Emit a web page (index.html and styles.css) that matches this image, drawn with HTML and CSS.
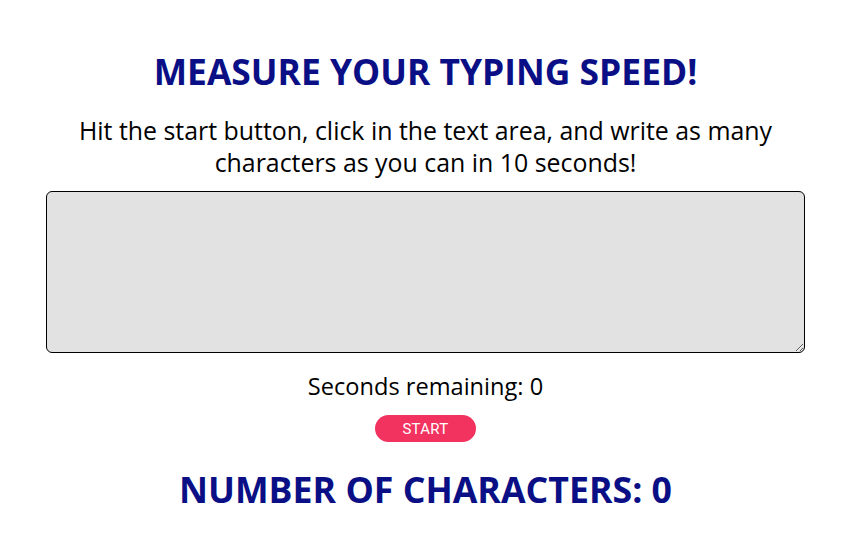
FILE: index.html
```html
<!DOCTYPE html>
<html>
<head>
<meta charset="utf-8">
<link rel="stylesheet" href="styles.css">
</head>
<body>
<main class="page">
  <h1 class="title">MEASURE YOUR TYPING SPEED!</h1>
  <p class="intro">Hit the start button, click in the text area, and write as many characters as you can in 10 seconds!</p>
  <textarea class="typing-area"></textarea>
  <p class="timer">Seconds remaining: 0</p>
  <button class="start-btn">START</button>
  <h2 class="result">NUMBER OF CHARACTERS: 0</h2>
</main>
</body>
</html>
```
FILE: styles.css
```css
html, body {
  margin: 0;
  padding: 0;
  background: #ffffff;
}
.page {
  display: flex;
  flex-direction: column;
  align-items: center;
  padding: 53px 46px 0;
  font-family: "Comic Sans MS", "Open Sans", sans-serif;
  color: #000;
}
.title {
  margin: 0;
  font-size: 35.4px;
  font-weight: 700;
  color: #0a0f85;
  line-height: 36px;
}
.intro {
  margin: 25px 0 0;
  width: 720px;
  text-align: center;
  font-size: 24.9px;
  line-height: 32px;
}
.typing-area {
  margin-top: 13px;
  box-sizing: border-box;
  width: 759px;
  height: 162px;
  border: 1px solid #000;
  border-radius: 6px;
  background: #e2e2e2;
  resize: vertical;
}
.timer {
  margin: 17px 0 0;
  font-size: 23.6px;
  line-height: 32px;
}
.start-btn {
  margin-top: 13px;
  width: 101px;
  height: 27px;
  border: none;
  border-radius: 14px;
  background: #f2325f;
  color: #fff;
  font-family: Roboto, "Liberation Sans", sans-serif;
  font-size: 15px;
  letter-spacing: 0.3px;
  padding: 0;
}
.result {
  margin: 29px 0 0;
  font-size: 35.7px;
  font-weight: 700;
  color: #0a0f85;
  line-height: 36px;
}
```
